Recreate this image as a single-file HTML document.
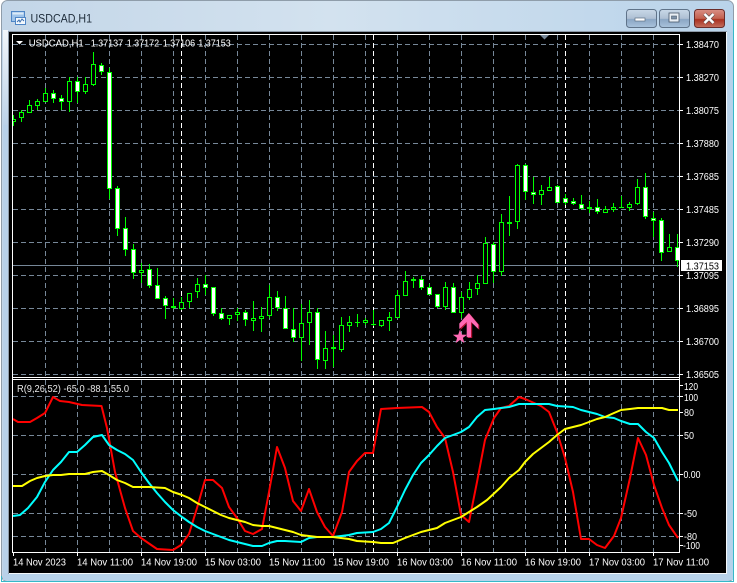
<!DOCTYPE html>
<html><head><meta charset="utf-8"><title>USDCAD,H1</title>
<style>
html,body{margin:0;padding:0;width:737px;height:583px;overflow:hidden;background:#fff}
svg{display:block}
text{font-family:"Liberation Sans",sans-serif}
</style></head><body>
<svg xmlns="http://www.w3.org/2000/svg" width="737" height="583" viewBox="0 0 737 583">
<defs>
<linearGradient id="fr" x1="0" y1="0" x2="1" y2="0"><stop offset="0" stop-color="#c3d6e8"/><stop offset=".45" stop-color="#d3e2ef"/><stop offset="1" stop-color="#b9d3ea"/></linearGradient>
<linearGradient id="btn" x1="0" y1="0" x2="0" y2="1"><stop offset="0" stop-color="#c9d9e8"/><stop offset=".5" stop-color="#aebfd3"/><stop offset=".55" stop-color="#8ba6c4"/><stop offset="1" stop-color="#a9c3dc"/></linearGradient>
<linearGradient id="cl" x1="0" y1="0" x2="0" y2="1"><stop offset="0" stop-color="#d98f85"/><stop offset=".5" stop-color="#c2614f"/><stop offset=".55" stop-color="#a9301f"/><stop offset="1" stop-color="#c4705f"/></linearGradient>
<linearGradient id="hl" x1="0" y1="0" x2="0" y2="1"><stop offset="0" stop-color="#f2f6fa"/><stop offset="1" stop-color="#bcd2e8"/></linearGradient>
<clipPath id="cp"><rect x="13" y="35" width="666" height="342"/></clipPath>
</defs>
<rect width="737" height="583" fill="#fff"/>
<rect x="1.500" y="0.500" width="732" height="581" rx="6" fill="url(#fr)" stroke="#8f9daa"/>
<path d="M1.500 576V581.500H733.500V20" fill="none" stroke="#35b8c8"/>
<rect x="3" y="30" width="5" height="95" fill="url(#hl)"/>
<rect x="3" y="125" width="5" height="455" fill="#b8d1e9"/>
<rect x="728" y="32" width="5" height="548" fill="#b5d2ea"/>
<rect x="8" y="574" width="720" height="7" fill="#b7d2ea"/>
<rect x="8" y="31" width="719" height="543" fill="#8d9aa8"/>
<rect x="9" y="32" width="718" height="542" fill="#f4f8fb"/>
<!-- title -->
<g>
<rect x="11.500" y="11.500" width="13" height="10" fill="#9fc4ea" stroke="#4f86c6"/>
<rect x="12.500" y="12.500" width="11" height="2" fill="#dcebf8"/>
<rect x="15.500" y="17.500" width="10" height="7" fill="#f4f9fd" stroke="#4f86c6"/>
<path d="M17 22l2-2 1 2 2-3 2 2" fill="none" stroke="#3a6fb0"/>
</g>
<text x="30.500" y="22.500" font-size="11.500" fill="#1c2a38" textLength="61.500" lengthAdjust="spacingAndGlyphs">USDCAD,H1</text>
<!-- buttons -->
<rect x="626.500" y="9.500" width="30" height="18" rx="3" fill="url(#btn)" stroke="#5f7389"/>
<rect x="635" y="18" width="10" height="3" fill="#fff" stroke="#5d6f82" stroke-width=".7"/>
<rect x="659.500" y="9.500" width="30" height="18" rx="3" fill="url(#btn)" stroke="#5f7389"/>
<rect x="669" y="13" width="10" height="9" fill="#e9eff5" stroke="#48586a" stroke-width=".8"/>
<rect x="671.500" y="16" width="5" height="3" fill="#7e93aa" stroke="#48586a" stroke-width=".6"/>
<rect x="694.500" y="9.500" width="30" height="18" rx="3" fill="url(#cl)" stroke="#6b2d2a"/>
<path d="M704.500 14l9 9M713.500 14l-9 9" stroke="#514a4c" stroke-width="3.600"/>
<path d="M704.500 14l9 9M713.500 14l-9 9" stroke="#fff" stroke-width="2.500"/>
<!-- client -->
<rect x="9" y="32" width="717" height="541" fill="#000"/>
<!-- grid -->
<g stroke="#778899" stroke-width="1" stroke-dasharray="5 3" fill="none" shape-rendering="crispEdges">
<path d="M13 44.500H679M13 77.500H679M13 110.500H679M13 143.500H679M13 176.500H679M13 209.500H679M13 242.500H679M13 275.500H679M13 308.500H679M13 341.500H679M13 374.500H679"/>
<path d="M13 396.500H679M13 435.500H679M13 474.500H679M13 513.500H679M13 536.500H679"/>
<path d="M45.500 35V377M77.500 35V377M109.500 35V377M141.500 35V377M173.500 35V377M205.500 35V377M237.500 35V377M269.500 35V377M301.500 35V377M333.500 35V377M365.500 35V377M397.500 35V377M429.500 35V377M461.500 35V377M493.500 35V377M525.500 35V377M557.500 35V377M589.500 35V377M621.500 35V377M653.500 35V377"/>
<path d="M45.500 380V552M77.500 380V552M109.500 380V552M141.500 380V552M173.500 380V552M205.500 380V552M237.500 380V552M269.500 380V552M301.500 380V552M333.500 380V552M365.500 380V552M397.500 380V552M429.500 380V552M461.500 380V552M493.500 380V552M525.500 380V552M557.500 380V552M589.500 380V552M621.500 380V552M653.500 380V552"/>
</g>
<g stroke="#fff" stroke-width="1" stroke-dasharray="5 3" fill="none" shape-rendering="crispEdges">
<path d="M181.500 35V377M373.500 35V377M565.500 35V377M181.500 380V552M373.500 380V552M565.500 380V552"/>
</g>
<path d="M13 265.500H679" stroke="#778899" stroke-width="1" shape-rendering="crispEdges"/>
<!-- candles -->
<g clip-path="url(#cp)" shape-rendering="crispEdges">
<path fill="none" stroke="#0f0" stroke-width="1" d="M13.500 115V126M21.500 110V122M29.500 100V113M37.500 99V110M45.500 88V102M53.500 90V103M61.500 95V110M69.500 77V112M77.500 77V103M85.500 77V94M93.500 52V86M101.500 63V75M109.500 68V199M117.500 186V236M125.500 217V256M133.500 244V279M141.500 263V283M149.500 264V288M157.500 268V299M165.500 296V319M173.500 298V309M181.500 297V310M189.500 293V308M197.500 278V298M205.500 275V295M213.500 287V316M221.500 308V320M229.500 315V325M237.500 308V321M245.500 310V326M253.500 301V331M261.500 307V332M269.500 285V318M277.500 291V311M285.500 296V329M293.500 308V342M301.500 304V361M309.500 300V345M317.500 308V369M325.500 331V369M333.500 335V367M341.500 317V352M349.500 316V332M357.500 314V327M365.500 318V325M373.500 310V326M381.500 320V327M389.500 312V331M397.500 290V318M405.500 271V296M413.500 277V288M421.500 276V290M429.500 284V295M437.500 294V308M445.500 282V310M453.500 283V313M461.500 292V318M469.500 282V300M477.500 275V295M485.500 237V284M493.500 242V283M501.500 214V276M509.500 196V236M517.500 164V229M525.500 164V200M533.500 177V204M541.500 185V205M549.500 177V191M557.500 185V203M565.500 194V205M573.500 198V205M581.500 195V209M589.500 201V213M597.500 199V214M605.500 206V213M613.500 203V212M621.500 196V208M629.500 202V211M637.500 179V205M645.500 173V219M653.500 212V237M661.500 218V261M669.500 234V247M677.500 234V267"/>
<path fill="#fff" stroke="#0f0" stroke-width="1" d="M51.500 93.500h4v5h-4zM59.500 98.500h4v3h-4zM75.500 81.500h4v10h-4zM99.500 65.500h4v6h-4zM107.500 72.500h4v116h-4zM115.500 188.500h4v40h-4zM123.500 228.500h4v21h-4zM131.500 249.500h4v23h-4zM147.500 269.500h4v16h-4zM155.500 285.500h4v13h-4zM163.500 298.500h4v7h-4zM203.500 284.500h4v3h-4zM211.500 287.500h4v26h-4zM219.500 313.500h4v5h-4zM243.500 312.500h4v7h-4zM275.500 297.500h4v10h-4zM283.500 308.500h4v20h-4zM291.500 329.500h4v8h-4zM315.500 312.500h4v47h-4zM419.500 279.500h4v8h-4zM427.500 287.500h4v7h-4zM435.500 294.500h4v12h-4zM451.500 287.500h4v25h-4zM491.500 244.500h4v27h-4zM523.500 165.500h4v26h-4zM531.500 192.500h4v2h-4zM555.500 186.500h4v16h-4zM563.500 198.500h4v4h-4zM571.500 201.500h4v2h-4zM579.500 204.500h4v4h-4zM595.500 207.500h4v4h-4zM643.500 187.500h4v29h-4zM651.500 218.500h4v2h-4zM659.500 220.500h4v32h-4zM675.500 247.500h4v13h-4z"/>
<path fill="#000" stroke="#0f0" stroke-width="1" d="M11.500 119.500h4v2h-4zM19.500 112.500h4v5h-4zM27.500 105.500h4v7h-4zM35.500 101.500h4v4h-4zM43.500 93.500h4v8h-4zM67.500 81.500h4v20h-4zM83.500 84.500h4v7h-4zM91.500 64.500h4v20h-4zM139.500 270.500h4v2h-4zM179.500 302.500h4v6h-4zM187.500 293.500h4v8h-4zM195.500 284.500h4v7h-4zM227.500 315.500h4v3h-4zM235.500 312.500h4v2h-4zM251.500 318.500h4v2h-4zM259.500 316.500h4v2h-4zM267.500 297.500h4v18h-4zM299.500 323.500h4v14h-4zM307.500 312.500h4v10h-4zM323.500 348.500h4v12h-4zM339.500 325.500h4v24h-4zM347.500 322.500h4v3h-4zM363.500 320.500h4v2h-4zM379.500 320.500h4v5h-4zM387.500 317.500h4v3h-4zM395.500 295.500h4v22h-4zM403.500 281.500h4v14h-4zM443.500 287.500h4v19h-4zM459.500 297.500h4v15h-4zM467.500 289.500h4v8h-4zM475.500 283.500h4v5h-4zM483.500 243.500h4v40h-4zM499.500 222.500h4v49h-4zM515.500 165.500h4v56h-4zM539.500 190.500h4v4h-4zM547.500 187.500h4v3h-4zM603.500 209.500h4v3h-4zM611.500 207.500h4v2h-4zM627.500 204.500h4v3h-4zM635.500 187.500h4v16h-4zM667.500 247.500h4v4h-4z"/>
<path fill="#0f0" d="M171 306h5v2h-5zM331 347h5v2h-5zM355 322h5v1h-5zM371 324h5v1h-5zM411 279h5v2h-5zM507 222h5v2h-5zM587 207h5v2h-5zM619 207h5v1h-5z"/>
</g>
<!-- arrow + star -->
<path d="M469.700 313.800L479.300 325V330L472.200 322.500V338H468V322.500L460.500 330V324Z" fill="#b01030"/>
<path d="M468.800 313L478.300 324.500V329L471 322V337.300H466.700V322L459.300 329V323.500Z" fill="#ff69b4"/>
<path d="M460 329.500L461.800 334.600 467.100 334.700 462.900 337.900 464.400 343.100 460 340 455.600 343.100 457.100 337.900 452.900 334.700 458.200 334.600Z" fill="#ff69b4"/>
<!-- indicator lines -->
<g fill="none" stroke-width="2" stroke-linejoin="round">
<polyline stroke="#f00" points="13,419 18,422 30,422 37,418 45,413 53,397 60,401 69,402 82,405 101.500,406 107,428 115,472 125,508 133,531 141,538 157,549 173,550 181,545 189,534 197,508 205,480 213,480 222,488 229,507 237,518 245,531 253,534 262,529 269,492 277,447 285,468 293,501 301,511 309,489 317,512 325,527 333,536 342,512 349,472 357,461 365,453 373,453 381,409 397,408 422,407 429,412 437,427 445,438 453,472 461,515 469,522 477,482 485,440 494,418 501,408 509,406 519,397 525,399 541,406 549,412 557,432 565,458 573,492 581,539 589,539 597,545 605,548 614,536 621,518 630,478 638,438 646,455 654,485 662,508 669,525 678,538"/>
<polyline stroke="#0ff" points="13,516 20,515 28,508 37,497 45,482 53,470 61,462 69,452 77,452 85,445 93,437 102,435 109,445 117,450 125,454 133,460 141,472 149,483 157,493 165,502 173,510 182,517 189,522 197,527 205,531 213,534 221,537 229,540 237,542 245,544 253,546 262,546 269,543 277,541 285,541 301,542 309,538 317,537 333,537 349,535 357,533 373,532 381,529 389,523 397,507 405,490 413,475 421,463 429,455 437,446 445,438 453,435 461,432 469,427 477,417 485,410 494,409 501,408 509,407 519,404 525,404 549,404 557,406 573,407 581,410 589,412 597,414 605,417 614,418 621,421 630,424 638,424 646,432 654,438 662,452 669,463 678,481"/>
<polyline stroke="#ff0" points="13,486 22,486 30,481 37,478 45,476 53,475 61,475 69,474 85,474 93,472 102,471 109,475 117,480 125,483 133,487 149,487 165,488 173,492 182,495 189,498 197,503 205,507 213,511 221,515 229,518 237,520 245,522 253,525 262,526 269,526 277,528 293,532 301,535 317,537 333,537 349,539 357,541 373,542 381,543 393,543 405,538 421,532 437,528 445,523 461,517 469,512 477,507 487,500 501,487 509,478 519,470 525,462 533,454 541,448 549,442 557,435 565,429 573,427 581,425 589,422 597,419 605,417 614,413 621,410 630,409 638,408 662,408 669,410 678,410"/>
</g>
<!-- frames -->
<g stroke="#fff" stroke-width="1" fill="none" shape-rendering="crispEdges">
<path d="M12.500 34V552.500M679.500 34V552.500M12 34.500H680M12 377.500H680M12 379.500H680M12 552.500H680"/>
<path d="M680 44.500h3M680 77.500h3M680 110.500h3M680 143.500h3M680 176.500h3M680 209.500h3M680 242.500h3M680 275.500h3M680 308.500h3M680 341.500h3M680 374.500h3"/>
<path d="M680 385.500h3M680 396.500h3M680 412.500h3M680 435.500h3M680 474.500h3M680 513.500h3M680 536.500h3M680 545.500h3"/>
<path d="M13.500 553v3M77.500 553v3M141.500 553v3M205.500 553v3M269.500 553v3M333.500 553v3M397.500 553v3M461.500 553v3M525.500 553v3M589.500 553v3M653.500 553v3"/>
</g>
<path d="M540 35h9l-4.500 4.500z" fill="#778899"/>
<path d="M16 41h7l-3.500 3.500z" fill="#fff"/>
<!-- legends -->
<g fill="#fff" font-size="10">
<text x="28.700" y="46.500" textLength="55" lengthAdjust="spacingAndGlyphs">USDCAD,H1</text>
<text x="90.700" y="46.500" textLength="32.500" lengthAdjust="spacingAndGlyphs">1.37137</text>
<text x="126.700" y="46.500" textLength="32.500" lengthAdjust="spacingAndGlyphs">1.37172</text>
<text x="162.700" y="46.500" textLength="32.500" lengthAdjust="spacingAndGlyphs">1.37106</text>
<text x="198.300" y="46.500" textLength="32.500" lengthAdjust="spacingAndGlyphs">1.37153</text>
<text x="17" y="392" textLength="112" lengthAdjust="spacingAndGlyphs" fill="#e8e8e8">R(9,26,52) -65.0 -88.1 55.0</text>
<text x="686" y="48" textLength="33" lengthAdjust="spacingAndGlyphs">1.38470</text>
<text x="686" y="81" textLength="33" lengthAdjust="spacingAndGlyphs">1.38270</text>
<text x="686" y="114" textLength="33" lengthAdjust="spacingAndGlyphs">1.38075</text>
<text x="686" y="147" textLength="33" lengthAdjust="spacingAndGlyphs">1.37880</text>
<text x="686" y="180" textLength="33" lengthAdjust="spacingAndGlyphs">1.37685</text>
<text x="686" y="213" textLength="33" lengthAdjust="spacingAndGlyphs">1.37485</text>
<text x="686" y="246" textLength="33" lengthAdjust="spacingAndGlyphs">1.37290</text>
<text x="686" y="279" textLength="33" lengthAdjust="spacingAndGlyphs">1.37095</text>
<text x="686" y="312" textLength="33" lengthAdjust="spacingAndGlyphs">1.36895</text>
<text x="686" y="345" textLength="33" lengthAdjust="spacingAndGlyphs">1.36700</text>
<text x="686" y="378" textLength="33" lengthAdjust="spacingAndGlyphs">1.36505</text>
<rect x="681" y="260" width="41" height="11" fill="#fff" stroke="none"/>
<text x="686" y="269.500" textLength="33" lengthAdjust="spacingAndGlyphs" fill="#000">1.37153</text>
<text x="684" y="390" textLength="14" lengthAdjust="spacingAndGlyphs">120</text>
<text x="684" y="401" textLength="14" lengthAdjust="spacingAndGlyphs">100</text>
<text x="684" y="416" textLength="10" lengthAdjust="spacingAndGlyphs">80</text>
<text x="684" y="439" textLength="10" lengthAdjust="spacingAndGlyphs">50</text>
<text x="683.500" y="478" textLength="17" lengthAdjust="spacingAndGlyphs">0.00</text>
<text x="684" y="517" textLength="13" lengthAdjust="spacingAndGlyphs">-50</text>
<text x="684" y="540" textLength="13" lengthAdjust="spacingAndGlyphs">-80</text>
<text x="683" y="549" textLength="17" lengthAdjust="spacingAndGlyphs">-100</text>
<text x="13" y="565.500" textLength="53" lengthAdjust="spacingAndGlyphs">14 Nov 2023</text>
<text x="77" y="565.500" textLength="56" lengthAdjust="spacingAndGlyphs">14 Nov 11:00</text>
<text x="141" y="565.500" textLength="56" lengthAdjust="spacingAndGlyphs">14 Nov 19:00</text>
<text x="205" y="565.500" textLength="56" lengthAdjust="spacingAndGlyphs">15 Nov 03:00</text>
<text x="269" y="565.500" textLength="56" lengthAdjust="spacingAndGlyphs">15 Nov 11:00</text>
<text x="333" y="565.500" textLength="56" lengthAdjust="spacingAndGlyphs">15 Nov 19:00</text>
<text x="397" y="565.500" textLength="56" lengthAdjust="spacingAndGlyphs">16 Nov 03:00</text>
<text x="461" y="565.500" textLength="56" lengthAdjust="spacingAndGlyphs">16 Nov 11:00</text>
<text x="525" y="565.500" textLength="56" lengthAdjust="spacingAndGlyphs">16 Nov 19:00</text>
<text x="589" y="565.500" textLength="56" lengthAdjust="spacingAndGlyphs">17 Nov 03:00</text>
<text x="653" y="565.500" textLength="56" lengthAdjust="spacingAndGlyphs">17 Nov 11:00</text>
</g>
</svg>
</body></html>
